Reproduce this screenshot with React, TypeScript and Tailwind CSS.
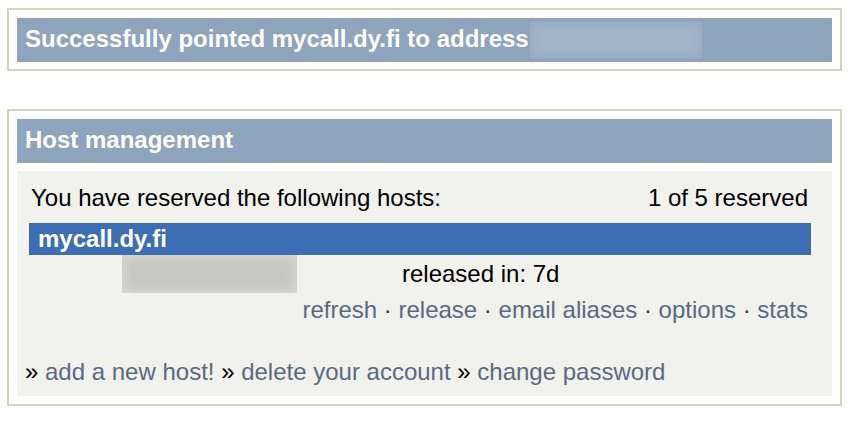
import React from "react";

const font = { fontFamily: '"Liberation Sans", Arial, sans-serif' };

function Sep() {
  return <span className="text-[#333]"> · </span>;
}

export default function App() {
  return (
    <div className="w-[852px] h-[428px] bg-white pt-[8px] text-[24px] text-black" style={font}>
      {/* Box 1 */}
      <div className="ml-[7px] w-[835px] border-2 border-[#d3d3c0] px-[8px] pt-[8px] pb-[7px]">
        <div className="h-[44px] bg-[#8ea5bd] flex items-center pl-[8px] pb-[2px]">
          <span className="font-bold text-white leading-[28px]">Successfully pointed mycall.dy.fi to address</span>
          <span className="ml-[1px] mt-[2px] h-[36px] w-[172px] bg-[#a4b6c9] shadow-[inset_0_0_8px_4px_#98adc3]"></span>
        </div>
      </div>

      {/* Box 2 */}
      <div className="ml-[7px] mt-[38px] w-[835px] border-2 border-[#d3d3c0] px-[8px] pt-[8px] pb-[8px]">
        <div className="h-[44px] bg-[#8ea5bd] flex items-center pl-[8px] pb-[2px]">
          <span className="font-bold text-white leading-[28px]">Host management</span>
        </div>
        <div className="mt-[8px] bg-[#f1f1ed] pt-[13px] pb-[10px]">
          <div className="ml-[12px] w-[782px]">
            <div className="h-[28px] leading-[28px] flex justify-between pl-[2px] pr-[3px]">
              <span>You have reserved the following hosts:</span>
              <span>1 of 5 reserved</span>
            </div>
            <div className="mt-[11px] h-[32px] bg-[#3d6eb4] flex items-center pl-[9px]">
              <span className="font-bold text-white leading-[28px]">mycall.dy.fi</span>
            </div>
            <div className="h-[38px] flex items-center">
              <div className="ml-[93px] h-[38px] w-[175px] bg-[#c7c7c2] shadow-[inset_0_0_8px_4px_#d6d6d1]"></div>
              <span className="ml-[105px] leading-[28px]">released in: 7d</span>
            </div>
            <div className="mt-[3px] h-[28px] leading-[28px] flex justify-end pr-[3px] text-[#5a6b80]">
              <span>
                refresh<Sep />release<Sep />email aliases<Sep />options<Sep />stats
              </span>
            </div>
          </div>
          <div className="mt-[34px] h-[28px] leading-[28px] pl-[8px]">
            <span>» </span>
            <span className="text-[#5a6b80]">add a new host!</span>
            <span> » </span>
            <span className="text-[#5a6b80]">delete your account</span>
            <span> » </span>
            <span className="text-[#5a6b80]">change password</span>
          </div>
        </div>
      </div>
    </div>
  );
}
